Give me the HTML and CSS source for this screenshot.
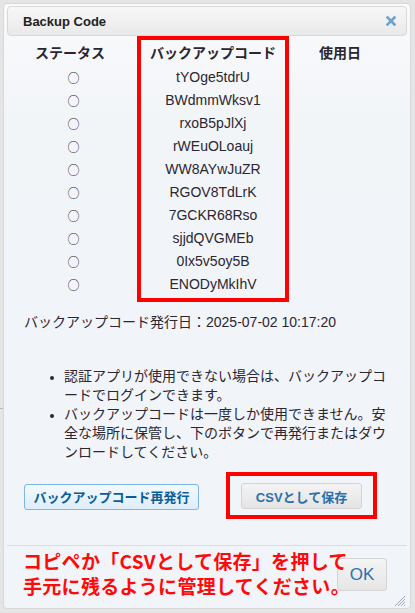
FILE: index.html
```html
<!DOCTYPE html>
<html lang="ja">
<head>
<meta charset="utf-8">
<title>Backup Code</title>
<link rel="stylesheet" href="styles.css">
</head>
<body>
<div class="page-line"></div>
<div class="dialog">
  <div class="titlebar">
    <span class="title">Backup Code</span>
    <span class="close" aria-label="close">
      <svg width="10" height="10" viewBox="0 0 10 10"><path d="M1.5 1.5 L8.5 8.5 M8.5 1.5 L1.5 8.5" stroke="#6ea2cd" stroke-width="2.6" stroke-linecap="square"/></svg>
    </span>
  </div>
  <div class="content">
    <div class="codes">
      <div class="col col-status">
        <div class="cell head">ステータス</div>
        <div class="cell">○</div><div class="cell">○</div><div class="cell">○</div><div class="cell">○</div><div class="cell">○</div>
        <div class="cell">○</div><div class="cell">○</div><div class="cell">○</div><div class="cell">○</div><div class="cell">○</div>
      </div>
      <div class="col col-code">
        <div class="cell head">バックアップコード</div>
        <div class="cell">tYOge5tdrU</div>
        <div class="cell">BWdmmWksv1</div>
        <div class="cell">rxoB5pJlXj</div>
        <div class="cell">rWEuOLoauj</div>
        <div class="cell">WW8AYwJuZR</div>
        <div class="cell">RGOV8TdLrK</div>
        <div class="cell">7GCKR68Rso</div>
        <div class="cell">sjjdQVGMEb</div>
        <div class="cell">0Ix5v5oy5B</div>
        <div class="cell">ENODyMkIhV</div>
      </div>
      <div class="col col-used">
        <div class="cell head">使用日</div>
      </div>
    </div>
    <p class="issued">バックアップコード発行日：2025-07-02 10:17:20</p>
    <ul class="notes">
      <li>認証アプリが使用できない場合は、バックアップコードでログインできます。</li>
      <li>バックアップコードは一度しか使用できません。安全な場所に保管し、下のボタンで再発行またはダウンロードしてください。</li>
    </ul>
    <div class="actions">
      <button class="btn btn-blue">バックアップコード再発行</button>
      <div class="mark">
        <button class="btn btn-gray">CSVとして保存</button>
      </div>
    </div>
  </div>
  <div class="footer">
    <button class="btn btn-ok">OK</button>
    <p class="annotation">コピペか「CSVとして保存」を押して<br>手元に残るように管理してください。</p>
    <svg class="grip" width="12" height="12" viewBox="0 0 12 12"><path d="M11 1 L1 11 M11 4 L4 11 M11 7 L7 11 M11 10 L10 11" stroke="#9aa8b8" stroke-width="1"/></svg>
  </div>
</div>
</body>
</html>
```
FILE: styles.css
```css
* { box-sizing: border-box; }
html, body { margin: 0; padding: 0; }
body {
  width: 415px;
  height: 613px;
  background: #e5e5e5;
  font-family: "Liberation Sans", "Noto Sans CJK JP", sans-serif;
  font-size: 14px;
  color: #2b2630;
  padding: 3px 4px 0 3px;
  position: relative;
  overflow: hidden;
}
.page-line {
  position: absolute;
  left: 0;
  top: 408px;
  width: 3px;
  height: 1px;
  background: #b9b9b9;
}
.dialog {
  width: 408px;
  height: 606px;
  border: 1px solid #d6d9dc;
  border-radius: 4px;
  background: linear-gradient(#f9fafc 0px, #f2f5f8 120px, #f1f4f8 100%);
  padding: 2px 3px 0 3px;
  display: flex;
  flex-direction: column;
}
.titlebar {
  height: 30px;
  border: 1px solid #d9d9d9;
  border-radius: 4px;
  background: linear-gradient(#f7f7f7, #e9e9e9);
  display: flex;
  align-items: center;
  justify-content: space-between;
  padding: 0 10px 0 15px;
  flex: none;
}
.title {
  font-weight: bold;
  font-size: 13px;
  color: #222;
}
.close { display: flex; width: 10px; height: 10px; }
.content {
  flex: 1;
  display: flex;
  flex-direction: column;
}
.codes {
  display: flex;
}
.col {
  display: flex;
  flex-direction: column;
  align-items: center;
  border: 4px solid transparent;
  padding: 0 0 2px;
}
.col-status { width: 130px; border-left: 0; }
.col-code { width: 152px; border-color: #ff0000; }
.col-used { width: 102px; }
.cell {
  height: 23px;
  line-height: 23px;
  white-space: nowrap;
}
.cell.head {
  height: 26px;
  line-height: 26px;
  font-weight: bold;
}
.col-status .cell:not(.head) {
  font-family: "Noto Sans CJK JP", sans-serif;
  font-size: 12px;
  padding-left: 7px;
}
.issued {
  margin: 10px 0 0 17px;
  line-height: 20px;
}
.notes {
  margin: 35px 0 0 0;
  padding: 0 0 0 57px;
  line-height: 19px;
  width: 388px;
}
.notes li::marker { font-size: 12px; }
.actions {
  display: flex;
  align-items: center;
  margin: 10px 0 0 17px;
}
.btn {
  font-family: "Liberation Sans", "Noto Sans CJK JP", sans-serif;
  border-radius: 3px;
  height: 26px;
  padding: 0;
  cursor: pointer;
}
.btn-blue {
  width: 175px;
  background: linear-gradient(#f3f9fe, #deedfa);
  border: 1px solid #7db5e4;
  color: #0b5d9a;
  font-weight: bold;
  font-size: 13px;
  margin-top: 2px;
}
.mark {
  margin-left: 27px;
  border: 4px solid #ff0000;
  padding: 7px 11px 6px 11px;
}
.btn-gray {
  width: 121px;
  background: linear-gradient(#f4f4f4, #e4e4e4);
  border: 1px solid #d4d4d4;
  color: #2a6fae;
  font-weight: bold;
  font-size: 13px;
  display: block;
}
.footer {
  flex: none;
  height: 63px;
  border-top: 1px solid #dadde0;
  display: flex;
  justify-content: flex-end;
  align-items: flex-start;
  padding: 12px 20px 0 0;
  position: relative;
}
.btn-ok {
  width: 50px;
  height: 33px;
  background: linear-gradient(#f4f4f4, #e6e6e6);
  border: 1px solid #d4d4d4;
  color: #2a6fae;
  font-size: 17px;
}
.annotation {
  position: absolute;
  left: 16px;
  top: 2px;
  margin: 0;
  color: #ff0a0a;
  font-family: "Noto Sans CJK JP", sans-serif;
  font-weight: bold;
  font-size: 19px;
  line-height: 25px;
  white-space: nowrap;
  letter-spacing: 0.3px;
}
.grip {
  position: absolute;
  right: 1px;
  bottom: 1px;
}
```
